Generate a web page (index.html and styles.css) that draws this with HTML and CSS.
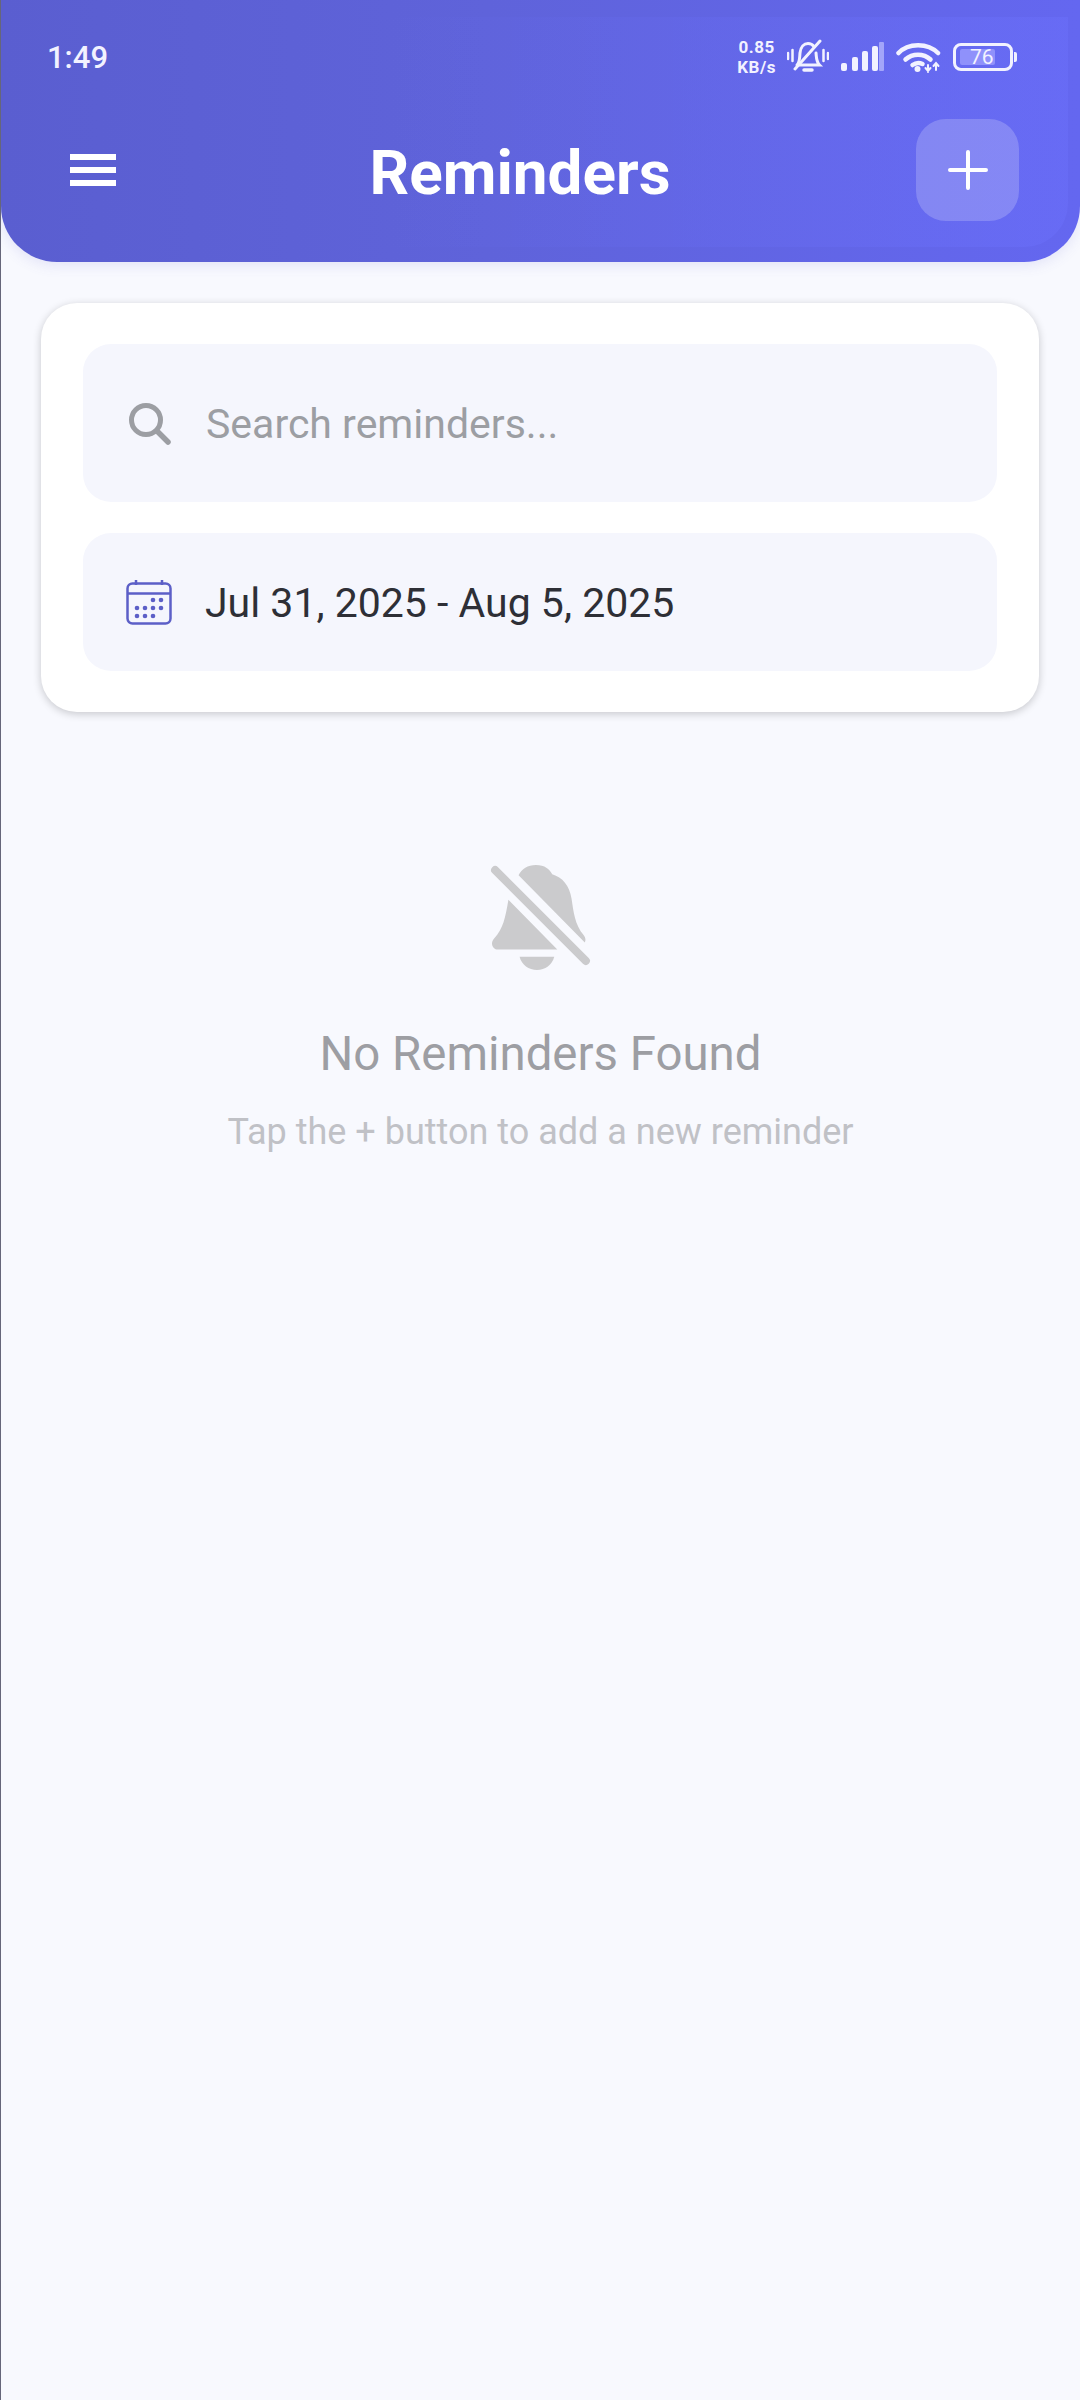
FILE: index.html
```html
<!doctype html>
<html lang="en-US">

<head>
	<title>Reminders</title>
	<link rel="stylesheet" href="styles.css">
</head>

<body>
	<div class="screen">
		<header class="header">
			<div class="status-bar">
				<span class="time">1:49</span>
				<div class="status-icons">
					<div class="speed"><span>0.85</span><span>KB/s</span></div>
					<svg class="ic-mute" width="42" height="36" viewBox="0 0 42 36" fill="none" stroke="#f2f2ff" stroke-linecap="round">
						<path d="M1 14v6M5.500 11v11M36.500 11v11M41 14v6" stroke-width="2.500"/>
						<path d="M10 26c3-3 2.500-7 3-12 .6-6 4-9.500 8-9.500 2.500 0 4.500 1 6 3M29 14c.5 4 0 8.500 3.500 12H10" stroke-width="3"/>
						<path d="M17 31h8" stroke-width="3.500"/>
						<path d="M8 30 33 2" stroke-width="3"/>
					</svg>
					<svg class="ic-signal" width="43" height="30" viewBox="0 0 43 30" fill="#f2f2ff">
						<rect x="0" y="21" width="6" height="8" rx="2"/>
						<rect x="11" y="15" width="6" height="14" rx="2"/>
						<rect x="21" y="9" width="6" height="20" rx="2"/>
						<rect x="31" y="4" width="6" height="25" rx="2"/>
						<rect x="38" y="0" width="5" height="29" rx="1" fill="#a3a5fa"/>
					</svg>
					<svg class="ic-wifi" width="45" height="32" viewBox="0 0 45 32" fill="none" stroke="#f2f2ff" stroke-width="4.500" stroke-linecap="round">
						<path d="M2.500 12C12 1.500 32 1.500 42 12"/>
						<path d="M9.500 18.500c7-6.500 18-6.500 25 0"/>
						<path d="M16.500 24c3.500-2.500 7-2.500 10-1"/>
						<circle cx="21.500" cy="28" r="3" fill="#f2f2ff" stroke="none"/>
						<path d="M32 24v7M40 22v7M29.500 27l2.500 3 2.500-3M37.500 25l2.500-3 2.500 3" stroke-width="2"/>
					</svg>
					<div class="battery">
						<div class="battery-body">
							<div class="battery-level"></div>
							<span class="battery-text">76</span>
						</div>
						<div class="battery-tip"></div>
					</div>
				</div>
			</div>
			<div class="toolbar">
				<div class="menu-icon"><i></i><i></i><i></i></div>
				<h1 class="title">Reminders</h1>
				<div class="add-btn">
					<svg width="40" height="40" viewBox="0 0 40 40" stroke="#fff" stroke-width="4" stroke-linecap="round">
						<path d="M20 2v36M2 20h36"/>
					</svg>
				</div>
			</div>
		</header>

		<section class="filter-card">
			<div class="field field-search">
				<svg class="field-icon" width="44" height="44" viewBox="0 0 44 44" fill="none" stroke="#9c9ea3" stroke-linecap="round">
					<circle cx="19" cy="19" r="14.500" stroke-width="5"/>
					<path d="M30 30 41 41" stroke-width="5.500"/>
				</svg>
				<span class="placeholder">Search reminders...</span>
			</div>
			<div class="field field-date">
				<svg class="field-icon" width="46" height="46" viewBox="0 0 46 46" fill="none" stroke="#5c5fc7" stroke-width="2.500">
					<rect x="1.500" y="4.500" width="43" height="40" rx="5"/>
					<path d="M1.500 14.500h43M10 1v5M36 1v5"/>
					<g fill="#5c5fc7" stroke="none">
						<circle cx="27" cy="21" r="2.300"/><circle cx="35" cy="21" r="2.300"/>
						<circle cx="11" cy="29" r="2.300"/><circle cx="19" cy="29" r="2.300"/><circle cx="27" cy="29" r="2.300"/><circle cx="35" cy="29" r="2.300"/>
						<circle cx="11" cy="37" r="2.300"/><circle cx="19" cy="37" r="2.300"/><circle cx="27" cy="37" r="2.300"/>
					</g>
				</svg>
				<span class="date-text">Jul 31, 2025 - Aug 5, 2025</span>
			</div>
		</section>

		<section class="empty">
			<svg class="empty-icon" width="104" height="108" viewBox="0 0 102 106">
				<path fill="#cbcbcd" d="M29 12c3-6 9-10 17-10 9 0 13 4 16 9 10 3 17 11 19 24 2 13 3 25 12 36 2 3 2 5 1 7z"/>
				<path fill="#cbcbcd" d="M19 36 67 85H9c-6 0-8-7-4-11 9-10 11-20 14-38z"/>
				<path fill="#cbcbcd" d="M30 92h34c-2 8-9 13-17 13s-15-5-17-13z"/>
				<path d="M6 7 95 96" stroke="#cbcbcd" stroke-width="8" stroke-linecap="round"/>
			</svg>
			<h2 class="empty-title">No Reminders Found</h2>
			<p class="empty-sub">Tap the + button to add a new reminder</p>
		</section>
	</div>
</body>
</html>
```

FILE: styles.css
```css
* {
	box-sizing: border-box;
}

body {
	margin: 0;
	background: #f8f9fe;
	font-family: Roboto, "Liberation Sans", sans-serif;
}

.screen {
	width: 1080px;
	height: 2400px;
	overflow: hidden;
	border-left: 1px solid #66667a;
	background: #f8f9fe;
}

.header {
	position: relative;
	width: 1079px;
	height: 262px;
	padding: 0 61px 0 46px;
	border-radius: 0 0 56px 56px;
	background: linear-gradient(90deg, #5a5ed0 0%, #5f63da 45%, #6467f0 100%);
	box-shadow: 0 3px 14px rgba(90, 94, 208, 0.14);
}

/* faint lighter panel behind the bar */
.header::before {
	content: "";
	position: absolute;
	top: 17px;
	right: 12px;
	bottom: 15px;
	left: 0;
	border-radius: 0 0 44px 0;
	background: linear-gradient(90deg, rgba(110, 115, 255, 0) 35%, rgba(110, 115, 255, 0.35) 100%);
}

.status-bar,
.toolbar {
	position: relative;
}

.status-bar {
	display: flex;
	justify-content: space-between;
	align-items: center;
	height: 114px;
	margin-right: 2px;
}

.time {
	font-size: 31px;
	font-weight: 500;
	color: #f2f2ff;
}

.status-icons {
	display: flex;
	align-items: center;
}

.speed {
	display: flex;
	flex-direction: column;
	align-items: center;
	margin-right: 11px;
	font-size: 17px;
	line-height: 20px;
	letter-spacing: 0.5px;
	font-weight: 700;
	color: #f2f2ff;
}

.ic-signal {
	margin-left: 12px;
}

.ic-wifi {
	margin-left: 12px;
}

.battery {
	display: flex;
	align-items: center;
	margin-left: 12px;
}

.battery-body {
	position: relative;
	width: 60px;
	height: 28px;
	border: 3px solid #f2f2ff;
	border-radius: 8px;
}

.battery-level {
	width: 35px;
	height: 16px;
	margin: 3px 0 0 4px;
	border-radius: 2px;
	background: #8f91fb;
}

.battery-text {
	position: absolute;
	top: -1px;
	left: 14px;
	font-size: 21px;
	line-height: 25px;
	color: #f2f2ff;
}

.battery-tip {
	width: 3px;
	height: 10px;
	margin-left: 1px;
	border-radius: 0 2px 2px 0;
	background: #f2f2ff;
}

.toolbar {
	display: flex;
	align-items: center;
	height: 102px;
	margin-top: 5px;
}

.menu-icon {
	display: flex;
	flex-direction: column;
	gap: 7px;
	width: 46px;
	margin-left: 23px;
}

.menu-icon i {
	display: block;
	height: 6px;
	background: #fff;
}

.title {
	flex: 1;
	margin: 0;
	padding: 5px 0 0 8px;
	text-align: center;
	font-size: 62px;
	font-weight: 700;
	color: #fff;
}

.add-btn {
	display: flex;
	justify-content: center;
	align-items: center;
	width: 103px;
	height: 102px;
	border-radius: 30px;
	background: rgba(255, 255, 255, 0.2);
}

.filter-card {
	display: flex;
	flex-direction: column;
	gap: 31px;
	width: 998px;
	height: 409px;
	margin: 41px 0 0 40px;
	padding: 41px 42px;
	border-radius: 36px;
	background: #fff;
	box-shadow: 0 2px 8px rgba(0, 0, 0, 0.2);
}

.field {
	display: flex;
	align-items: center;
	gap: 35px;
	padding-left: 44px;
	border-radius: 28px;
	background: #f5f6fd;
	font-size: 41px;
}

.field span {
	padding-top: 2px;
}

.field-search {
	height: 158px;
}

.field-date {
	height: 138px;
	gap: 33px;
	padding-left: 43px;
}

.placeholder {
	color: #9c9ea3;
}

.date-text {
	color: #2e2f36;
}

.empty {
	display: flex;
	flex-direction: column;
	align-items: center;
	padding-top: 151px;
}

.empty-title {
	margin: 56px 0 0;
	font-size: 47.400px;
	line-height: 54px;
	font-weight: 400;
	color: #9d9ea3;
}

.empty-sub {
	margin: 30px 0 0;
	font-size: 36px;
	line-height: 42px;
	color: #c0c1c6;
}
```
